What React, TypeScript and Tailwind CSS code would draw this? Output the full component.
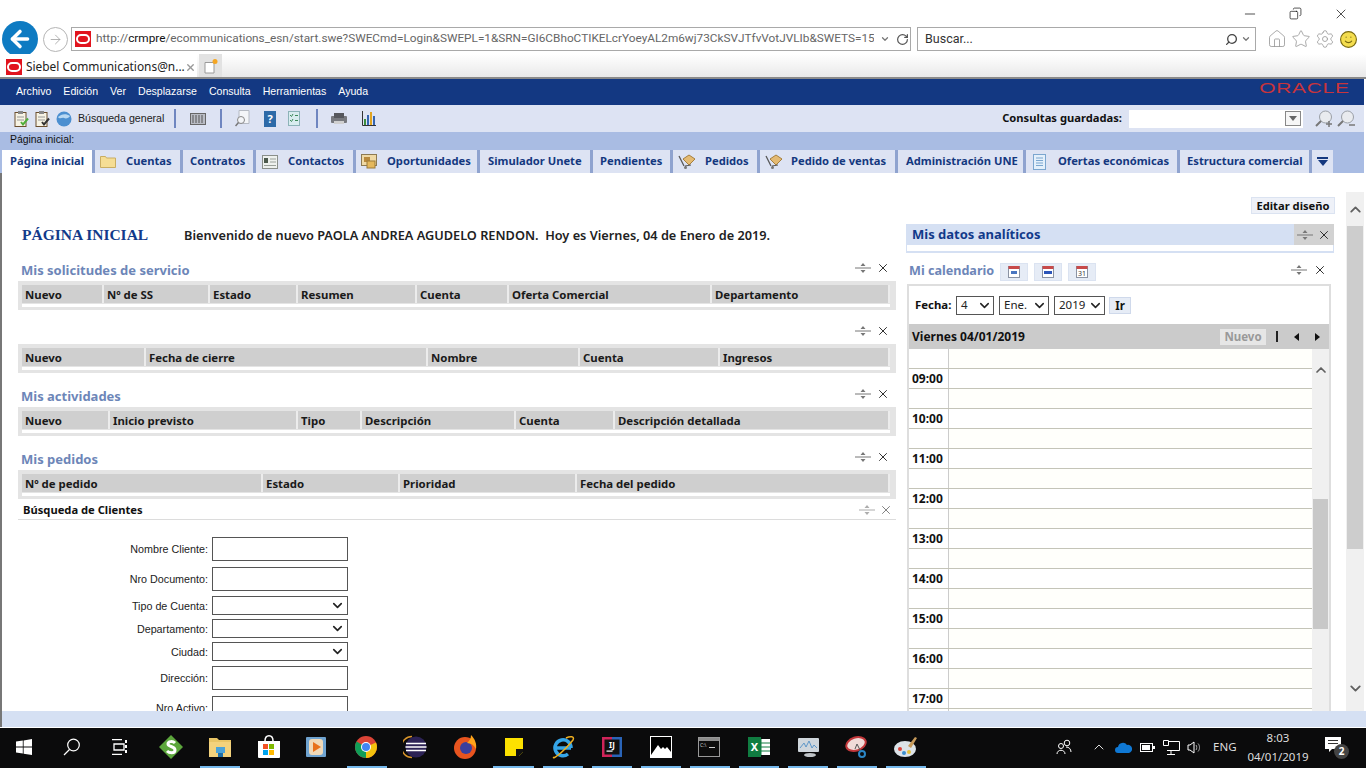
import React from 'react';
import { ChevronDown, ChevronUp, X, ArrowLeft, ArrowRight, RotateCw, Search, Home, Star, Settings, Smile, Minus, Copy } from 'lucide-react';

// Small drawn icons -------------------------------------------------------
const OracleFav = () => (
  <svg width="16" height="16" viewBox="0 0 16 16" className="shrink-0">
    <rect width="16" height="16" fill="#e1141e" />
    <rect x="2" y="4" width="12" height="8" rx="4" fill="none" stroke="#fff" strokeWidth="2" />
  </svg>
);

const Splitter = () => (
  <svg width="16" height="10" viewBox="0 0 16 10">
    <path d="M0 5h16" stroke="#777" />
    <path d="M8 0l-2.500 3h5zM8 10l-2.500-3h5z" fill="#777" />
  </svg>
);

const FolderIcon = () => (
  <svg width="16" height="13" viewBox="0 0 16 13">
    <path d="M.5 12.500v-11h5l1 1.500h9v9.500z" fill="#f5dd94" stroke="#c9ad62" />
  </svg>
);

const ContactIcon = () => (
  <svg width="16" height="14" viewBox="0 0 16 14">
    <rect x=".5" y=".5" width="15" height="13" fill="#eef1ee" stroke="#8a8f8a" />
    <rect x="2" y="3" width="4" height="5" fill="#4c5a4c" />
    <path d="M8 4h6M8 7h6M2 10.500h12" stroke="#9aa09a" />
  </svg>
);

const OppIcon = () => (
  <svg width="16" height="15" viewBox="0 0 16 15">
    <rect x=".5" y=".5" width="15" height="11" fill="#efd9a5" stroke="#8d7a52" />
    <rect x="3" y="3" width="6" height="5" fill="#b98a3c" />
    <rect x="6" y="7" width="8" height="7" fill="#e5b85c" stroke="#9c7a38" />
  </svg>
);

const CartIcon = () => (
  <svg width="18" height="16" viewBox="0 0 18 16">
    <path d="M1 2l5 10" stroke="#555" strokeWidth="1.200" />
    <path d="M5 5l6-4 6 4-6 6z" fill="#e4ba72" stroke="#a67f3d" />
    <circle cx="7.500" cy="13.500" r="1.500" fill="#777" />
    <path d="M7 12l6-1" stroke="#555" />
  </svg>
);

const DocIcon = () => (
  <svg width="13" height="16" viewBox="0 0 13 16">
    <rect x=".5" y=".5" width="12" height="15" fill="#e4f0fb" stroke="#7ba6cf" />
    <path d="M3 4h7M3 6.500h7M3 9h7M3 11.500h7" stroke="#7ba6cf" />
  </svg>
);

const ToolSep = ({ ml }: { ml: string }) => <span className={`${ml} w-[2px] h-[19px] bg-[#6f86c0] shrink-0`} />;

const Clip = ({ color, ml }: { color: string; ml?: string }) => (
  <svg width="15" height="18" viewBox="0 0 15 18" className={ml}>
    <rect x="1" y="2.500" width="11" height="14" fill="#f7f3e4" stroke="#6b4e2e" />
    <rect x="4" y="1" width="5" height="3" fill="#888" />
    <path d="M3 7h7M3 10h7" stroke="#999" />
    <path d="M7 12l2 2.500 5-6" fill="none" stroke={color} strokeWidth="2" />
  </svg>
);

const Lens = ({ plus, ml }: { plus?: boolean; ml: string }) => (
  <svg width="19" height="18" viewBox="0 0 19 18" className={ml}>
    <circle cx="10.500" cy="7" r="6" fill="#e9ebef" stroke="#9a9fa6" />
    <path d="M6 11l-5 5" stroke="#777" strokeWidth="2" />
    {plus ? <path d="M11 14h6M14 11v6" stroke="#777" strokeWidth="1.500" /> : <path d="M12 15h6" stroke="#777" strokeWidth="1.500" />}
  </svg>
);

const CalBtn = ({ glyph }: { glyph: React.ReactNode }) => (
  <span className="w-[28px] h-[18px] bg-[#e6ecf6] border border-[#dbe3f1] flex items-center justify-center">
    <svg width="12" height="13" viewBox="0 0 12 13">
      <rect x=".5" y="1.500" width="11" height="11" fill="#fff" stroke="#8b93a3" />
      <rect x=".5" y="1" width="11" height="3" fill="#c84a4a" />
      {glyph}
    </svg>
  </span>
);

// Siebel table ------------------------------------------------------------
const HeaderTable = ({ cols }: { cols: [string, number][] }) => (
  <div className="ml-[16px] w-[878px] h-[29px] shrink-0 bg-[#e4e4e4] pt-[4px] pl-[4px] pr-[6px] flex flex-col">
    <div className="flex h-[18px]">
      {cols.map(([label, w]) => (
        <div key={label} style={{ width: w }} className="h-[18px] bg-[#cfcfcf] border-r-2 border-[#ececec] pl-[3px] text-[11.400px] leading-[20px] font-bold text-[#1a1a1a] whitespace-nowrap">
          {label}
        </div>
      ))}
    </div>
    <div className="mt-[1px] h-[3px] bg-white" />
  </div>
);

const AppletHead = ({ title }: { title?: string }) => (
  <div className="h-[34px] shrink-0 ml-[19px] w-[873px] flex items-end justify-between pb-[2px]">
    <span className="text-[13px] leading-[18px] font-bold text-[#6d86b8]">{title}</span>
    <span className="flex items-center gap-[5px] h-[18px] pr-[4px] mb-[2px]">
      <Splitter />
      <X size={14} strokeWidth={1.600} className="text-[#222]" />
    </span>
  </div>
);

const Field = ({ label, select, h, mt }: { label: string; select?: boolean; h: string; mt: string }) => (
  <div className={`flex items-center ${h} ${mt} shrink-0`}>
    <span className="w-[190px] text-right pr-[4px] pt-[1px] font-['Liberation_Sans',sans-serif] text-[10.750px] text-[#222] whitespace-nowrap">{label}</span>
    <span className={`w-[136px] ${h} border border-[#555] bg-white flex items-center justify-end pr-[2px]`}>
      {select && <ChevronDown size={15} strokeWidth={2.600} className="text-[#222]" />}
    </span>
  </div>
);

const DateSelect = ({ value, w }: { value: string; w: string }) => (
  <span className={`${w} h-[19px] border border-[#555] bg-white flex items-center justify-between pl-[4px] pr-[1px] text-[11.500px] text-[#222]`}>
    {value}
    <ChevronDown size={15} strokeWidth={2.400} className="text-[#222]" />
  </span>
);

const hours = ['09:00', '10:00', '11:00', '12:00', '13:00', '14:00', '15:00', '16:00', '17:00'];

const tabCls = 'h-[23px] flex items-center bg-[#dde3f3] border-r-[3px] border-[#8fa3cf] text-[11.200px] font-bold text-[#14387f] whitespace-nowrap shrink-0';

const taskbarUnderlines = [
  { w: 'w-[40px]', ml: 'ml-[200px]' },
  { w: 'w-[40px]', ml: 'ml-[107px]' },
  { w: 'w-[41px]', ml: 'ml-[106px]' },
  { w: 'w-[40px]', ml: 'ml-[9px]' },
  { w: 'w-[40px]', ml: 'ml-[9px]' },
  { w: 'w-[40px]', ml: 'ml-[9px]' },
  { w: 'w-[40px]', ml: 'ml-[9px]' },
  { w: 'w-[40px]', ml: 'ml-[9px]' },
  { w: 'w-[40px]', ml: 'ml-[9px]' },
  { w: 'w-[40px]', ml: 'ml-[9px]' },
  { w: 'w-[40px]', ml: 'ml-[9px]' },
];

export default function App() {
  return (
    <div className="w-[1366px] h-[768px] overflow-hidden flex flex-col bg-white font-['Noto_Sans',sans-serif]">
      {/* Browser chrome */}
      <div className="h-[79px] shrink-0 flex flex-col bg-white">
        <div className="h-[8px] flex justify-end items-start pr-[17px] pt-[6px] gap-[31px]">
          <Minus size={16} strokeWidth={1.100} className="text-[#111]" />
          <Copy size={13} strokeWidth={1.300} className="text-[#111] mt-[1px] -scale-x-100" />
          <X size={16} strokeWidth={1.100} className="text-[#111]" />
        </div>
        <div className="h-[19px]" />
        <div className="h-[24px] flex items-center">
          <span className="ml-[2px] w-[36px] h-[36px] rounded-full bg-[#0e7bc2] flex items-center justify-center shrink-0 -mt-[1px]">
            <ArrowLeft size={26} strokeWidth={3.200} className="text-white" />
          </span>
          <span className="ml-[5px] w-[25px] h-[25px] rounded-full border border-[#b5b5b5] flex items-center justify-center shrink-0">
            <ArrowRight size={15} strokeWidth={1.200} className="text-[#999]" />
          </span>
          <div className="ml-[3px] w-[840px] h-[24px] border border-[#a9a9a9] flex items-center pl-[3px] pr-[3px] shrink-0">
            <OracleFav />
            <span className="ml-[5px] font-['Roboto',sans-serif] text-[11.800px] text-[#666] whitespace-nowrap overflow-hidden w-[778px] shrink-0">
              http://<span className="text-[#111]">crmpre</span>/ecommunications_esn/start.swe?SWECmd=Login&amp;SWEPL=1&amp;SRN=GI6CBhoCTIKELcrYoeyAL2m6wj73CkSVJTfvVotJVLIb&amp;SWETS=15
            </span>
            <ChevronDown size={10} strokeWidth={3} className="ml-[6px] text-[#777] shrink-0" />
            <RotateCw size={13} strokeWidth={2.200} className="ml-[6px] text-[#555] shrink-0" />
          </div>
          <div className="ml-[6px] w-[339px] h-[24px] border border-[#a9a9a9] flex items-center pl-[7px] pr-[4px] shrink-0">
            <span className="font-['Roboto',sans-serif] text-[12.500px] text-[#333] flex-1">Buscar...</span>
            <Search size={13} strokeWidth={2.400} className="text-[#444] -scale-x-100" />
            <ChevronDown size={10} strokeWidth={3} className="ml-[3px] text-[#777]" />
          </div>
          <div className="ml-[11px] flex items-center gap-[4px]">
            <Home size={20} strokeWidth={1} className="text-[#999]" />
            <Star size={20} strokeWidth={1} className="text-[#999]" />
            <Settings size={20} strokeWidth={1} className="text-[#999]" />
            <Smile size={19} strokeWidth={1.400} className="text-[#7a6a10] fill-[#f4dd4e]" />
          </div>
        </div>
        <div className="mt-[3px] h-[25px] flex bg-gradient-to-b from-white to-[#e9e9e9] border-b-2 border-[#8a8a8a]">
          <div className="w-[197px] h-[23px] bg-white flex items-center pl-[6px] pr-[3px] pt-[3px]">
            <OracleFav />
            <span className="ml-[4px] text-[11.900px] text-[#222] whitespace-nowrap flex-1">Siebel Communications@n...</span>
            <X size={11} strokeWidth={3} className="text-[#999] shrink-0" />
          </div>
          <div className="ml-[2px] w-[23px] h-[23px] bg-[#e2e2e2] flex items-center justify-center">
            <svg width="16" height="16" viewBox="0 0 16 16">
              <path d="M2 4.500h9v10.500h-9z" fill="#fff" stroke="#9a9a9a" />
              <circle cx="12" cy="3.500" r="2.500" fill="#f5a623" />
            </svg>
          </div>
        </div>
      </div>

      {/* Menu bar */}
      <div className="h-[26px] shrink-0 bg-[#133882] flex items-center pl-[16px] pr-[14px] font-['Liberation_Sans',sans-serif] text-[10.600px] text-white border-r-2 border-r-white">
        <div className="flex gap-[12px] flex-1">
          {['Archivo', 'Edición', 'Ver', 'Desplazarse', 'Consulta', 'Herramientas', 'Ayuda'].map(m => (
            <span key={m}>{m}</span>
          ))}
        </div>
        <span className="font-['Liberation_Sans',sans-serif] text-[15px] tracking-[0.500px] text-[#c8343c] scale-x-[1.400] origin-right -mt-[7px]">ORACLE</span>
      </div>

      {/* Toolbar */}
      <div className="h-[27px] shrink-0 bg-[#dde3f3] flex items-center pl-[14px] pr-[8px] border-r-2 border-r-white">
        <Clip color="#4fae3a" />
        <Clip color="#333" ml="ml-[6px]" />
        <svg width="16" height="16" viewBox="0 0 16 16" className="ml-[6px]">
          <circle cx="8" cy="8" r="7.500" fill="#4c8fd0" />
          <path d="M2 6c3-3 8-4 12-1-1 2-4 3-6 2S4 9 2 6z" fill="#b9d8f2" />
        </svg>
        <span className="ml-[6px] w-[87px] whitespace-nowrap font-['Liberation_Sans',sans-serif] text-[10.650px] text-[#222]">Búsqueda general</span>
        <ToolSep ml="ml-[9px]" />
        <svg width="16" height="12" viewBox="0 0 16 12" className="ml-[14px]">
          <rect x=".5" y=".5" width="15" height="11" fill="#b9bcc4" stroke="#666" />
          <path d="M3 2v8M6 2v8M9 2v8M12 2v8" stroke="#555" />
        </svg>
        <ToolSep ml="ml-[14px]" />
        <svg width="15" height="17" viewBox="0 0 15 17" className="ml-[13px]">
          <path d="M4 .5h10v13H4z" fill="#f3f5f8" stroke="#b5bac3" />
          <circle cx="6" cy="10" r="3.500" fill="#f3f5f8" stroke="#888" />
          <path d="M3.500 12.500l-3 3.500" stroke="#777" strokeWidth="1.500" />
        </svg>
        <svg width="12" height="16" viewBox="0 0 12 16" className="ml-[14px]">
          <rect width="12" height="16" fill="#2d6aa8" />
          <text x="6" y="12" textAnchor="middle" fontSize="11" fontWeight="700" fill="#fff">?</text>
        </svg>
        <svg width="12" height="15" viewBox="0 0 12 15" className="ml-[12px]">
          <rect x=".5" y=".5" width="11" height="14" fill="#d8ecef" stroke="#8cb3b8" />
          <path d="M2 4l1.500 1.500L5 3M2 9l1.500 1.500L5 8M7 4.500h3M7 9.500h3" fill="none" stroke="#3d8a5a" />
        </svg>
        <ToolSep ml="ml-[16px]" />
        <svg width="16" height="12" viewBox="0 0 16 12" className="ml-[13px]">
          <rect y="3" width="16" height="7" rx="1" fill="#77797e" />
          <rect x="3" width="10" height="5" fill="#55575c" />
          <rect x="3" y="8" width="10" height="3" fill="#d0d0d0" />
        </svg>
        <svg width="14" height="15" viewBox="0 0 14 15" className="ml-[15px]">
          <path d="M.5 0v14.500H14" fill="none" stroke="#333" />
          <rect x="2" y="8" width="2" height="6" fill="#3c8f3c" />
          <rect x="5" y="4" width="2" height="10" fill="#3565b0" />
          <rect x="8" y="1" width="2" height="13" fill="#e0a420" />
          <rect x="11" y="5" width="2" height="9" fill="#3565b0" />
        </svg>
        <div className="flex-1" />
        <span className="text-[11.200px] font-bold text-[#111]">Consultas guardadas:</span>
        <div className="ml-[7px] w-[174px] h-[18px] bg-white flex items-center justify-end pr-[2px]">
          <span className="w-[16px] h-[15px] border border-[#888] bg-[#f6f6f6] flex items-center justify-center">
            <span className="w-0 h-0 border-l-[4px] border-r-[4px] border-t-[5px] border-l-transparent border-r-transparent border-t-[#666]" />
          </span>
        </div>
        <Lens plus ml="ml-[12px]" />
        <Lens ml="ml-[3px]" />
      </div>

      {/* Breadcrumb + tabs */}
      <div className="h-[41px] shrink-0 bg-[#a9bce3] flex flex-col border-r-2 border-r-white">
        <div className="h-[18px] pl-[10px] font-['Liberation_Sans',sans-serif] text-[10.400px] leading-[15px] text-[#111]">Página inicial:</div>
        <div className="h-[23px] flex">
          <div className="h-[23px] w-[93px] ml-[2px] bg-white border-r-[3px] border-[#8fa3cf] flex items-center pl-[8px] text-[11.200px] font-bold text-[#14387f] whitespace-nowrap shrink-0">Página inicial</div>
          <div className={`${tabCls} w-[88px] pl-[5px]`}><FolderIcon /><span className="ml-[10px]">Cuentas</span></div>
          <div className={`${tabCls} w-[73px] pl-[7px]`}>Contratos</div>
          <div className={`${tabCls} w-[100px] pl-[6px]`}><ContactIcon /><span className="ml-[10px]">Contactos</span></div>
          <div className={`${tabCls} w-[124px] pl-[5px]`}><OppIcon /><span className="ml-[10px]">Oportunidades</span></div>
          <div className={`${tabCls} w-[113px] pl-[8px]`}>Simulador Unete</div>
          <div className={`${tabCls} w-[80px] pl-[7px]`}>Pendientes</div>
          <div className={`${tabCls} w-[87px] pl-[5px]`}><CartIcon /><span className="ml-[9px]">Pedidos</span></div>
          <div className={`${tabCls} w-[138px] pl-[5px]`}><CartIcon /><span className="ml-[8px]">Pedido de ventas</span></div>
          <div className={`${tabCls} w-[128px] pl-[8px]`}>Administración UNE</div>
          <div className={`${tabCls} w-[154px] pl-[7px]`}><DocIcon /><span className="ml-[12px]">Ofertas económicas</span></div>
          <div className={`${tabCls} w-[132px] pl-[7px]`}>Estructura comercial</div>
          <div className="w-[21px] h-[23px] bg-[#dde3f3] flex flex-col items-center justify-center shrink-0">
            <span className="w-[11px] h-[2px] bg-[#14387f] mb-[1px]" />
            <span className="w-0 h-0 border-l-[5px] border-r-[5px] border-t-[6px] border-l-transparent border-r-transparent border-t-[#14387f]" />
          </div>
        </div>
      </div>

      {/* Content */}
      <div className="h-[538px] shrink-0 flex border-l-2 border-[#777] overflow-hidden">
        <div className="w-[1344px] shrink-0 flex flex-col overflow-hidden">
          <div className="h-[24px] shrink-0" />
          <div className="h-[16px] shrink-0 flex justify-end pr-[11px]">
            <span className="h-[17px] w-[84px] bg-[#eef1f8] border border-[#dbe3f1] text-center text-[11.200px] leading-[15px] font-bold text-[#111]">Editar diseño</span>
          </div>
          <div className="flex flex-1 overflow-hidden">
            {/* Left column */}
            <div className="w-[904px] shrink-0 flex flex-col overflow-hidden">
              <div className="h-[34px] shrink-0 flex items-start pt-[11px]">
                <span className="ml-[20px] w-[162px] text-[15.500px] leading-[22px] font-bold text-[#123a8a] font-['Liberation_Serif',serif]">PÁGINA INICIAL</span>
                <span className="text-[12.740px] leading-[22px] font-semibold text-[#222] whitespace-pre">Bienvenido de nuevo PAOLA ANDREA AGUDELO RENDON.  Hoy es Viernes, 04 de Enero de 2019.</span>
              </div>
              <AppletHead title="Mis solicitudes de servicio" />
              <HeaderTable cols={[['Nuevo', 82], ['Nº de SS', 106], ['Estado', 88], ['Resumen', 119], ['Cuenta', 92], ['Oferta Comercial', 203], ['Departamento', 178]]} />
              <AppletHead />
              <HeaderTable cols={[['Nuevo', 124], ['Fecha de cierre', 282], ['Nombre', 152], ['Cuenta', 140], ['Ingresos', 170]]} />
              <AppletHead title="Mis actividades" />
              <HeaderTable cols={[['Nuevo', 88], ['Inicio previsto', 188], ['Tipo', 64], ['Descripción', 154], ['Cuenta', 99], ['Descripción detallada', 275]]} />
              <AppletHead title="Mis pedidos" />
              <HeaderTable cols={[['Nº de pedido', 241], ['Estado', 137], ['Prioridad', 177], ['Fecha del pedido', 313]]} />
              <div className="ml-[16px] w-[878px] h-[20px] mt-[1px] pt-[1px] border-b border-[#dcdcdc] flex items-center justify-between pl-[5px] pr-[3px] shrink-0">
                <span className="text-[11.200px] font-bold text-[#111]">Búsqueda de Clientes</span>
                <span className="flex items-center gap-[4px] opacity-60">
                  <Splitter />
                  <X size={14} strokeWidth={1.600} className="text-[#222]" />
                </span>
              </div>
              <div className="ml-[20px] flex flex-col shrink-0">
                <Field label="Nombre Cliente:" h="h-[24px]" mt="mt-[17px]" />
                <Field label="Nro Documento:" h="h-[24px]" mt="mt-[6px]" />
                <Field label="Tipo de Cuenta:" select h="h-[19px]" mt="mt-[5px]" />
                <Field label="Departamento:" select h="h-[19px]" mt="mt-[4px]" />
                <Field label="Ciudad:" select h="h-[19px]" mt="mt-[4px]" />
                <Field label="Dirección:" h="h-[24px]" mt="mt-[5px]" />
                <Field label="Nro Activo:" h="h-[24px]" mt="mt-[6px]" />
              </div>
            </div>

            {/* Right column */}
            <div className="w-[428px] shrink-0 flex flex-col overflow-hidden">
              <div className="mt-[11px] h-[21px] flex bg-[#d5e0f3] shrink-0">
                <span className="flex-1 pl-[6px] text-[13px] leading-[20px] font-bold text-[#123a8a]">Mis datos analíticos</span>
                <span className="w-[40px] bg-[#d2d2d2] flex items-center justify-center gap-[4px]">
                  <Splitter />
                  <X size={14} strokeWidth={1.600} className="text-[#222]" />
                </span>
              </div>
              <div className="h-[8px] border-x border-b-2 border-[#d5e0f3] shrink-0" />
              <div className="h-[31px] flex items-center pl-[3px] pr-[7px] pt-[6px] shrink-0">
                <span className="w-[91px] text-[12.600px] font-bold text-[#6d86b8] whitespace-nowrap">Mi calendario</span>
                <span className="flex gap-[6px] flex-1">
                  <CalBtn glyph={<rect x="3" y="6" width="6" height="3" fill="#4a76c0" />} />
                  <CalBtn glyph={<rect x="2" y="6" width="8" height="3" fill="#2c55b8" />} />
                  <CalBtn glyph={<text x="6" y="11" textAnchor="middle" fontSize="7" fill="#333">31</text>} />
                </span>
                <span className="flex items-center gap-[6px] -mt-[3px]">
                  <Splitter />
                  <X size={14} strokeWidth={1.600} className="text-[#222]" />
                </span>
              </div>
              <div className="ml-[1px] w-[424px] flex-1 border-2 border-b-0 border-[#dedede] flex flex-col overflow-hidden">
                <div className="h-[38px] shrink-0 flex items-center pl-[6px] gap-[5px]">
                  <span className="w-[36px] text-[11.400px] font-bold text-[#111] whitespace-nowrap">Fecha:</span>
                  <DateSelect value="4" w="w-[38px]" />
                  <DateSelect value="Ene." w="w-[50px]" />
                  <DateSelect value="2019" w="w-[51px]" />
                  <span className="-ml-[1px] w-[22px] h-[17px] bg-[#e6ecf6] border border-[#cfd9eb] text-center text-[11.500px] leading-[15px] font-bold text-[#111]">Ir</span>
                </div>
                <div className="h-[25px] shrink-0 bg-[#cbcbcb] flex items-center pl-[3px] pr-[9px]">
                  <span className="flex-1 text-[12px] font-bold text-[#111]">Viernes 04/01/2019</span>
                  <span className="w-[46px] h-[16px] bg-[#e6e6e6] text-center text-[11.500px] leading-[15px] font-bold text-[#999]">Nuevo</span>
                  <span className="ml-[10px] w-[2px] h-[11px] bg-[#222]" />
                  <span className="ml-[16px] w-0 h-0 border-y-[4px] border-r-[5px] border-y-transparent border-r-[#111]" />
                  <span className="ml-[16px] w-0 h-0 border-y-[4px] border-l-[5px] border-y-transparent border-l-[#111]" />
                </div>
                <div className="flex flex-1 overflow-hidden">
                  <div className="flex-1 flex flex-col">
                    <div className="h-[20px] shrink-0 flex border-b border-[#c4c4b8]">
                      <span className="w-[40px] border-r border-[#cccccc]" />
                      <span className="flex-1 bg-[#fffffb]" />
                    </div>
                    {hours.map(h => (
                      <React.Fragment key={h}>
                        <div className="h-[20px] shrink-0 flex border-b border-[#c4c4b8]">
                          <span className="w-[40px] border-r border-[#cccccc] pl-[3px] text-[12px] leading-[20px] font-bold text-[#111]">{h}</span>
                          <span className="flex-1 bg-white" />
                        </div>
                        <div className="h-[20px] shrink-0 flex border-b border-[#c4c4b8]">
                          <span className="w-[40px] border-r border-[#cccccc]" />
                          <span className="flex-1 bg-[#fffffb]" />
                        </div>
                      </React.Fragment>
                    ))}
                  </div>
                  <div className="w-[17px] shrink-0 bg-[#f0f0f0] flex flex-col items-center pt-[13px]">
                    <ChevronUp size={16} strokeWidth={2.600} className="text-[#606060] shrink-0" />
                    <span className="mt-[121px] w-[15px] h-[130px] bg-[#c8c8c8] shrink-0" />
                  </div>
                </div>
              </div>
            </div>
          </div>
        </div>
        {/* Outer scrollbar */}
        <div className="w-[18px] shrink-0 mt-[19px] bg-[#f0f0f0] flex flex-col items-center">
          <div className="h-[34px] shrink-0 flex items-center justify-center">
            <ChevronUp size={17} strokeWidth={2.600} className="text-[#606060]" />
          </div>
          <div className="w-[16px] h-[323px] shrink-0 bg-[#cdcdcd]" />
          <div className="flex-1 flex items-end justify-center pb-[14px]">
            <ChevronDown size={17} strokeWidth={2.600} className="text-[#606060]" />
          </div>
        </div>
      </div>

      {/* Status band */}
      <div className="h-[16px] shrink-0 bg-[#d5e0f3] border-l-2 border-[#777]" />
      <div className="h-[1px] shrink-0 bg-white" />

      {/* Taskbar */}
      <div className="h-[40px] shrink-0 bg-[#0b0b0c] flex flex-col text-white">
        <div className="h-[38px] flex items-center">
          <svg width="16" height="16" viewBox="0 0 16 16" className="ml-[16px]">
            <path d="M0 2.500L6.800 1.500v6H0zM7.600 1.400L16 0v7.500H7.600zM0 8.400h6.800v6L0 13.500zM7.600 8.400H16V16l-8.400-1.200z" fill="#fff" />
          </svg>
          <svg width="18" height="18" viewBox="0 0 18 18" className="ml-[31px]">
            <circle cx="10.500" cy="7" r="5.800" fill="none" stroke="#fff" strokeWidth="1.200" />
            <path d="M6.500 11.500L1 17" stroke="#fff" strokeWidth="1.300" />
          </svg>
          <svg width="16" height="16" viewBox="0 0 16 16" className="ml-[31px]">
            <path d="M0 .5h10M0 15.500h10M2 5h10v6H2z" fill="none" stroke="#fff" strokeWidth="1.300" />
            <rect x="13" y="1" width="2" height="3" fill="#fff" />
            <rect x="13" y="6" width="2" height="3" fill="#fff" />
            <rect x="13" y="11" width="2" height="3" fill="#fff" />
          </svg>
          <svg width="24" height="24" viewBox="0 0 24 24" className="ml-[31px]">
            <path d="M12 0l12 12-12 12L0 12z" fill="#5ca63c" />
            <path d="M16 8c-2-2-7-2-7 1s7 2 7 6-6 3-8 1" fill="none" stroke="#fff" strokeWidth="3" />
          </svg>
          <svg width="22" height="20" viewBox="0 0 22 20" className="ml-[26px]">
            <path d="M0 1h8l2 2h12v17H0z" fill="#e9c566" />
            <rect x="0" y="5" width="22" height="15" fill="#f3d27c" />
            <rect x="7" y="10" width="9" height="6" fill="#4ba3d9" />
            <rect x="9" y="16" width="5" height="4" fill="#1f6fa8" />
          </svg>
          <svg width="24" height="24" viewBox="0 0 24 24" className="ml-[26px]">
            <path d="M1 6h22v16a1 1 0 0 1-1 1H2a1 1 0 0 1-1-1z" fill="#fff" />
            <path d="M8 6c0-7 8-7 8 0" fill="none" stroke="#fff" strokeWidth="1.500" />
            <rect x="6" y="9" width="5" height="5" fill="#f25022" />
            <rect x="12" y="9" width="5" height="5" fill="#7fba00" />
            <rect x="6" y="15" width="5" height="5" fill="#00a4ef" />
            <rect x="12" y="15" width="5" height="5" fill="#ffb900" />
          </svg>
          <svg width="20" height="20" viewBox="0 0 20 20" className="ml-[25px]">
            <rect width="20" height="20" rx="1" fill="#6fa3d0" />
            <rect x="3" y="2" width="14" height="16" rx="3" fill="#f0d9b8" />
            <path d="M7 5l8 5-8 5z" fill="#e8711c" />
          </svg>
          <svg width="22" height="22" viewBox="0 0 22 22" className="ml-[29px]">
            <circle cx="11" cy="11" r="11" fill="#db4437" />
            <path d="M11 11L1.500 5.500A11 11 0 0 0 11 22z" fill="#0f9d58" />
            <path d="M11 11V22A11 11 0 0 0 21 6.500z" fill="#f4c20d" />
            <circle cx="11" cy="11" r="5" fill="#fff" />
            <circle cx="11" cy="11" r="4" fill="#4285f4" />
          </svg>
          <svg width="24" height="24" viewBox="0 0 24 24" className="ml-[26px]">
            <path d="M9 1.500A10.500 10.500 0 0 0 9 22.500" fill="none" stroke="#d9952b" strokeWidth="1.500" />
            <circle cx="13" cy="12" r="10.500" fill="#2c2255" />
            <path d="M3 8.500h20M2.500 12h21M3 15.500h20" stroke="#fff" strokeWidth="1.500" />
          </svg>
          <svg width="24" height="24" viewBox="0 0 24 24" className="ml-[26px]">
            <circle cx="12" cy="13" r="11" fill="#e8541f" />
            <circle cx="13" cy="13" r="6" fill="#3a3f9e" />
            <path d="M18 0c4 4 6 9 5 14-2-4-5-6-9-6 2-2 4-4 4-8z" fill="#ffa31a" />
          </svg>
          <svg width="18" height="18" viewBox="0 0 18 18" className="ml-[28px]">
            <path d="M0 0h18v14l-4 4H0z" fill="#fce100" />
            <path d="M18 11h-7v7h3l4-4z" fill="#111" />
          </svg>
          <svg width="24" height="24" viewBox="0 0 24 24" className="ml-[28px]">
            <path d="M20 13H5M20 13A8 8 0 1 0 17 19" fill="none" stroke="#35a5e8" strokeWidth="3.500" />
            <path d="M3 22C0 25 10 20 22 5c2-4-3-4-7-2" fill="none" stroke="#f0b020" strokeWidth="1.500" />
          </svg>
          <svg width="20" height="20" viewBox="0 0 20 20" className="ml-[27px]">
            <rect width="20" height="20" fill="#2a64b8" />
            <rect width="10" height="20" fill="#d0245a" />
            <rect x="2.500" y="2.500" width="15" height="15" fill="#111" />
            <text x="10" y="10.500" textAnchor="middle" fontSize="8" fontWeight="700" fill="#fff">IJ</text>
            <rect x="4.500" y="13.500" width="6" height="1.200" fill="#fff" />
          </svg>
          <svg width="22" height="22" viewBox="0 0 22 22" className="ml-[28px]">
            <rect width="22" height="22" fill="#fff" />
            <rect x="1" y="1" width="20" height="20" fill="#000" />
            <path d="M1 19l7-10 3 4 2-2 2 2 2-2 4 5v5H1z" fill="#fff" />
          </svg>
          <svg width="22" height="20" viewBox="0 0 22 20" className="ml-[26px]">
            <rect x=".5" y=".5" width="21" height="19" fill="#0c0c0c" stroke="#999" />
            <rect x="1" y="1" width="20" height="3" fill="#8c8c8c" />
            <text x="2" y="10" fontSize="5" fill="#ccc">C:\</text>
            <rect x="11" y="10" width="6" height="1" fill="#ccc" />
          </svg>
          <svg width="22" height="22" viewBox="0 0 22 22" className="ml-[28px]">
            <rect x="9" y="3" width="13" height="16" fill="#fff" />
            <path d="M13 3v16M9 7h13M9 11h13M9 15h13" stroke="#107c41" />
            <rect y="1" width="13" height="20" fill="#107c41" />
            <text x="6.500" y="15" textAnchor="middle" fontSize="11" fontWeight="700" fill="#fff">X</text>
          </svg>
          <svg width="23" height="22" viewBox="0 0 23 22" className="ml-[27px]">
            <rect x="1" y="2" width="21" height="14" rx="1" fill="#cfd6dc" />
            <path d="M3 12l4-5 2 4 3-6 3 7 2-3 3 3" fill="none" stroke="#5d97c9" />
            <ellipse cx="13" cy="19" rx="6" ry="2" fill="#bfc4c8" />
          </svg>
          <svg width="24" height="24" viewBox="0 0 24 24" className="ml-[25px]">
            <ellipse cx="11" cy="9" rx="10" ry="6.500" fill="#f0dbd8" stroke="#c2373a" strokeWidth="2" transform="rotate(-18 11 9)" />
            <path d="M12 9l4 8M12 9l-2 5" stroke="#555" />
            <circle cx="17" cy="19" r="3" fill="none" stroke="#2b86c5" strokeWidth="2" />
          </svg>
          <svg width="24" height="24" viewBox="0 0 24 24" className="ml-[25px]">
            <ellipse cx="11" cy="14" rx="11" ry="8" fill="#dce3e8" />
            <circle cx="6" cy="14" r="2" fill="#d9443a" />
            <circle cx="10" cy="18" r="2" fill="#3c8fd0" />
            <circle cx="15" cy="17" r="2" fill="#e6c13c" />
            <path d="M14 11l7-9 2 1-6 10z" fill="#c79a5a" />
          </svg>
          <div className="flex-1" />
          <svg width="16" height="16" viewBox="0 0 16 16">
            <circle cx="11" cy="4" r="2.800" fill="none" stroke="#fff" />
            <circle cx="5" cy="7" r="2.500" fill="none" stroke="#fff" />
            <path d="M1 15c0-5 8-5 8 0M10 8c3 0 5 2 5 5" fill="none" stroke="#fff" />
          </svg>
          <ChevronUp size={16} strokeWidth={1.300} className="ml-[19px] text-white" />
          <svg width="17" height="11" viewBox="0 0 17 11" className="ml-[8px]">
            <path d="M3 11a3 3 0 0 1 0-6 5 5 0 0 1 9-2 4 4 0 0 1 2 8z" fill="#0f78d4" />
          </svg>
          <svg width="15" height="9" viewBox="0 0 15 9" className="ml-[8px]">
            <rect x=".5" y=".5" width="12" height="8" fill="none" stroke="#fff" />
            <rect x="2" y="2" width="8" height="5" fill="#fff" />
            <rect x="13" y="3" width="2" height="3" fill="#fff" />
          </svg>
          <svg width="17" height="15" viewBox="0 0 17 15" className="ml-[8px]">
            <path d="M5 1.500h11.500v9H4M.5 .5h5v5h-5zM8 10.500v3.500M4 14.500h8" fill="none" stroke="#fff" />
          </svg>
          <svg width="16" height="13" viewBox="0 0 16 13" className="ml-[7px]">
            <path d="M1 4h2l4-3v11L3 9H1z" fill="none" stroke="#fff" />
            <path d="M9 4c1 1 1 4 0 5M11 2.500c2 2 2 6 0 8" fill="none" stroke="#aaa" />
          </svg>
          <span className="ml-[10px] w-[30px] text-[11.500px] text-[#ddd]">ENG</span>
          <div className="ml-[2px] w-[66px] flex flex-col items-center text-[11.500px] leading-[19px] text-[#ddd]">
            <span>8:03</span>
            <span>04/01/2019</span>
          </div>
          <div className="ml-[14px] mr-[17px] w-[24px] h-[24px] relative">
            <svg width="16" height="15" viewBox="0 0 16 15" className="mt-[2px]">
              <path d="M0 0h16v12H7l-3 3v-3H0z" fill="#fff" />
              <path d="M3 3.500h10M3 6.500h10" stroke="#333" />
            </svg>
            <span className="absolute right-[0px] bottom-[0px] w-[15px] h-[15px] rounded-full bg-[#444] text-[10px] leading-[15px] font-bold text-center text-white">2</span>
          </div>
        </div>
        <div className="h-[2px] flex">
          {taskbarUnderlines.map((u, i) => (
            <span key={i} className={`${u.w} ${u.ml} h-[2px] bg-[#76b9ed]`} />
          ))}
        </div>
      </div>
    </div>
  );
}
